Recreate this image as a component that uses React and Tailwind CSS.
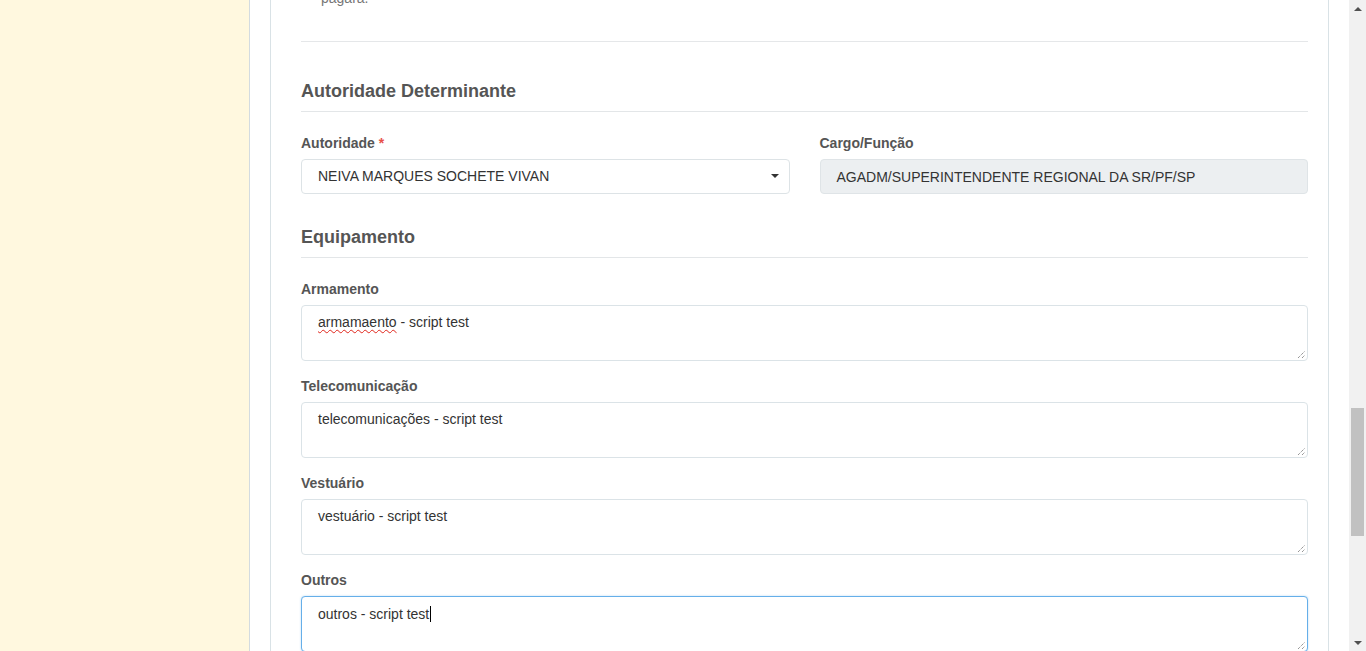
import React from "react";

const fields = [
  { label: "Armamento", value: "armamaento", rest: " - script test", typo: true },
  { label: "Telecomunicação", value: "telecomunicações - script test" },
  { label: "Vestuário", value: "vestuário - script test" },
  { label: "Outros", value: "outros - script test", focused: true },
];

const Grip = () => (
  <svg
    className="absolute right-[1px] bottom-[1px]"
    width="9"
    height="9"
    viewBox="0 0 9 9"
  >
    <line x1="1" y1="8" x2="8" y2="1" stroke="#6b6b6b" strokeWidth="1" strokeDasharray="1 1" />
    <line x1="5" y1="8" x2="8" y2="5" stroke="#6b6b6b" strokeWidth="1" strokeDasharray="1 1" />
  </svg>
);

const TextArea = ({ field }) => (
  <div
    className={`relative h-[56px] rounded-[4px] border bg-white pl-[16px] pt-[6px] text-sm leading-5 text-[#333] ${
      field.focused
        ? "border-[#66afe9] shadow-[0_0_2px_rgba(102,175,233,0.5)]"
        : "border-[#dbe3e7]"
    }`}
  >
    {field.typo ? (
      <span>
        <span className="underline decoration-wavy decoration-[#e0251b] decoration-1 underline-offset-2">
          {field.value}
        </span>
        {field.rest}
      </span>
    ) : (
      <span>{field.value}</span>
    )}
    {field.focused && (
      <span className="ml-[1px] inline-block h-[16px] w-[1px] translate-y-[3px] bg-black" />
    )}
    <Grip />
  </div>
);

const Heading = ({ children, className }) => (
  <h3
    className={`border-b border-[#e3e6e8] pb-[10px] text-[18px] leading-5 font-bold text-[#555] ${className}`}
  >
    {children}
  </h3>
);

const Label = ({ children, required }) => (
  <label className="mb-[6px] block text-sm leading-5 font-bold text-[#555]">
    {children}
    {required && <span className="text-[#e8504a]"> *</span>}
  </label>
);

const App = () => (
  <div className="flex h-[651px] overflow-hidden bg-white font-['Liberation_Sans',Arial,sans-serif]">
    {/* Sidebar */}
    <div className="w-[250px] shrink-0 border-r border-[#d3dbe0] bg-[#fff8df]" />

    {/* Main */}
    <div className="flex-1 px-[20px]">
      <div className="flex h-full flex-col border-x border-[#d9e2e6] bg-white pl-[30px] pr-[20px]">
        <p className="-mt-[12px] pl-[20px] text-sm leading-5 text-[#777]">pagara.</p>
        <div className="mt-[33px] border-t border-[#e5e7e9]" />

        <Heading className="mt-[39px]">Autoridade Determinante</Heading>

        <div className="mt-[21px] grid grid-cols-2 gap-[30px]">
          <div>
            <Label required>Autoridade</Label>
            <div className="flex h-[35px] items-center justify-between rounded-[4px] border border-[#dde3e6] bg-white pb-[1px] pl-[16px] pr-[10px] text-sm text-[#333]">
              <span>NEIVA MARQUES SOCHETE VIVAN</span>
              <svg width="8" height="4" viewBox="0 0 8 4">
                <path d="M0 0 L8 0 L4 4 Z" fill="#333" />
              </svg>
            </div>
          </div>
          <div>
            <Label>Cargo/Função</Label>
            <div className="flex h-[35px] items-center rounded-[4px] border border-[#dfe4e7] bg-[#eceff1] pl-[16px] text-sm text-[#333]">
              AGADM/SUPERINTENDENTE REGIONAL DA SR/PF/SP
            </div>
          </div>
        </div>

        <Heading className="mt-[33px]">Equipamento</Heading>

        <div className="mt-[21px] flex flex-col gap-[15px]">
          {fields.map((f) => (
            <div key={f.label}>
              <Label>{f.label}</Label>
              <TextArea field={f} />
            </div>
          ))}
        </div>
      </div>
    </div>

    {/* Scrollbar */}
    <div className="flex w-[17px] shrink-0 flex-col bg-[#f1f1f1]">
      <div className="flex h-[17px] items-center justify-center">
        <svg width="8" height="4" viewBox="0 0 8 4">
          <path d="M0 4 L8 4 L4 0 Z" fill="#505050" />
        </svg>
      </div>
      <div className="mx-[2px] mt-[391px] h-[128px] bg-[#c1c1c1]" />
      <div className="flex-1" />
      <div className="flex h-[17px] items-center justify-center">
        <svg width="8" height="4" viewBox="0 0 8 4">
          <path d="M0 0 L8 0 L4 4 Z" fill="#505050" />
        </svg>
      </div>
    </div>
  </div>
);

export default App;
